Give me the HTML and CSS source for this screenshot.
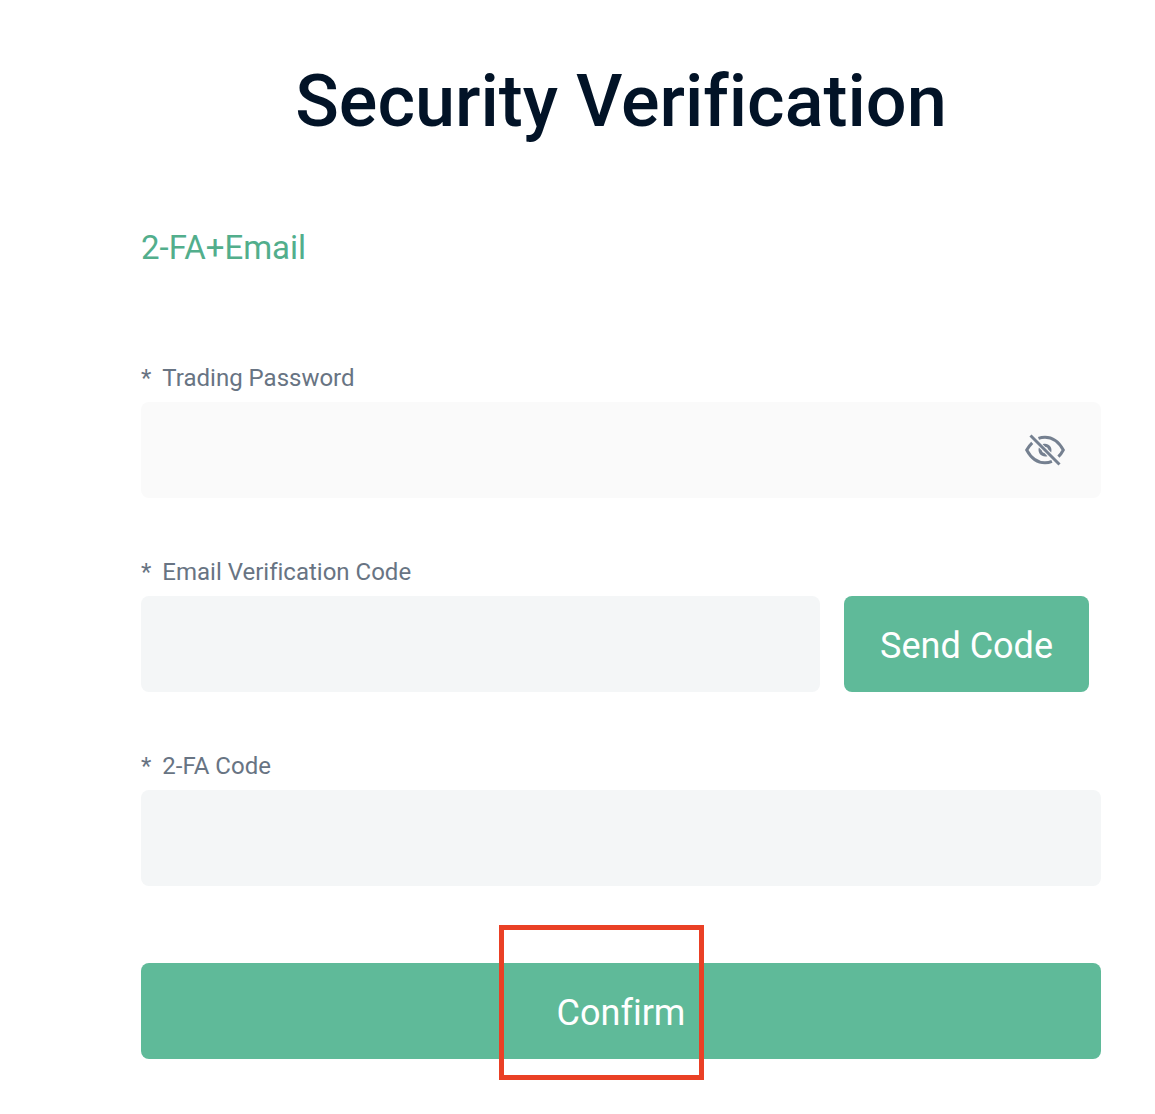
FILE: index.html
```html
<!DOCTYPE html>
<html lang="en">
<head>
    <meta charset="UTF-8">
    <meta name="viewport" content="width=device-width, initial-scale=1.0">
    <title>Security Verification</title>
    <link rel="stylesheet" href="styles.css">
</head>
<body>
    <main class="container">
        <h1>Security Verification</h1>
        <a class="method" href="#verifyForm">2-FA+Email</a>

        <form id="verifyForm">
            <div class="form-group">
                <label for="password"><span class="star">*</span>Trading Password</label>
                <div class="password-box">
                    <input type="password" id="password" required>
                    <button type="button" class="eye" id="toggleBtn" aria-label="Show password">
                        <svg width="40" height="32" viewBox="0 0 40 32" fill="none" stroke="#758090" stroke-width="3">
                            <path d="M13.5 4.4C15.5 3.6 17.7 3.2 20 3.2C28.5 3.2 34.5 9 38.3 16C37 18.5 35.4 20.7 33.4 22.6"/>
                            <path d="M7.2 8.8C5 10.9 3.2 13.4 1.7 16C5.5 23 11.5 28.8 20 28.8C22.5 28.8 24.8 28.3 26.9 27.4"/>
                            <path d="M17.6 10.3C22.500 8.500 28 12.500 26.200 18.500L23 15.300C22.700 13.900 21.700 13.200 20.500 13.100Z" fill="#758090" stroke="none"/>
                            <path d="M13.900 13.600C12 19.500 17.500 24 22.500 22.200L19.400 19.100C18 18.900 17.200 18 17 16.700Z" fill="#758090" stroke="none"/>
                            <path d="M5.500 1.500L34.500 30.500"/>
                        </svg>
                    </button>
                </div>
            </div>
            <div class="form-group">
                <label for="emailCode"><span class="star">*</span>Email Verification Code</label>
                <div class="code-row">
                    <input type="text" id="emailCode" required>
                    <button type="button">Send Code</button>
                </div>
            </div>
            <div class="form-group">
                <label for="faCode"><span class="star">*</span>2-FA Code</label>
                <input type="text" id="faCode" required>
            </div>
            <div class="submit-section">
                <button type="submit">Confirm</button>
                <div class="highlight"></div>
            </div>
        </form>
    </main>

    <script>
        // Show or hide the trading password
        document.getElementById('toggleBtn').addEventListener('click', function() {
            const input = document.getElementById('password');
            input.type = input.type === 'password' ? 'text' : 'password';
        });
    </script>
</body>
</html>
```
FILE: styles.css
```css
* {
    box-sizing: border-box;
}
body {
    margin: 0;
    background-color: #fff;
    font-family: Roboto, "Liberation Sans", sans-serif;
    font-variant-ligatures: none;
}
.container {
    padding: 60px 54px 54px 141px;
}
h1 {
    margin: 0 0 84px;
    color: #021327;
    font-size: 72px;
    font-weight: 500;
    line-height: 84px;
    text-align: center;
}
.method {
    display: block;
    margin-bottom: 86px;
    color: #52ae8c;
    font-size: 33px;
    line-height: 40px;
    text-decoration: none;
}
.form-group {
    margin-bottom: 50px;
}
.form-group label {
    display: block;
    color: #687483;
    font-size: 24px;
    line-height: 48px;
}
.star {
    margin-right: 11px;
}
input {
    display: block;
    width: 100%;
    height: 96px;
    padding: 0 32px;
    border: none;
    border-radius: 8px;
    background-color: #f4f6f7;
    font-family: inherit;
    font-size: 32px;
}
button {
    height: 96px;
    padding: 4px 36px 0;
    border: none;
    border-radius: 8px;
    background-color: #5fba99;
    color: #fff;
    font-family: inherit;
    font-size: 36px;
    font-variant-ligatures: none;
    cursor: pointer;
}
.password-box {
    display: flex;
    align-items: center;
    padding-right: 36px;
    border-radius: 8px;
    background-color: #fafafa;
}
.password-box input {
    flex: 1;
    background-color: transparent;
}
.password-box .eye {
    display: flex;
    height: 32px;
    padding: 0;
    background-color: transparent;
}
.code-row {
    display: flex;
    gap: 24px;
    padding-right: 12px;
}
.code-row input {
    flex: 1;
}
.submit-section {
    position: relative;
    margin-top: 77px;
}
.submit-section button {
    display: block;
    width: 100%;
}
.highlight {
    position: absolute;
    top: -38px;
    left: calc(50% - 122px);
    width: 205px;
    height: 155px;
    border: 5px solid #ea4025;
    pointer-events: none;
}
```
